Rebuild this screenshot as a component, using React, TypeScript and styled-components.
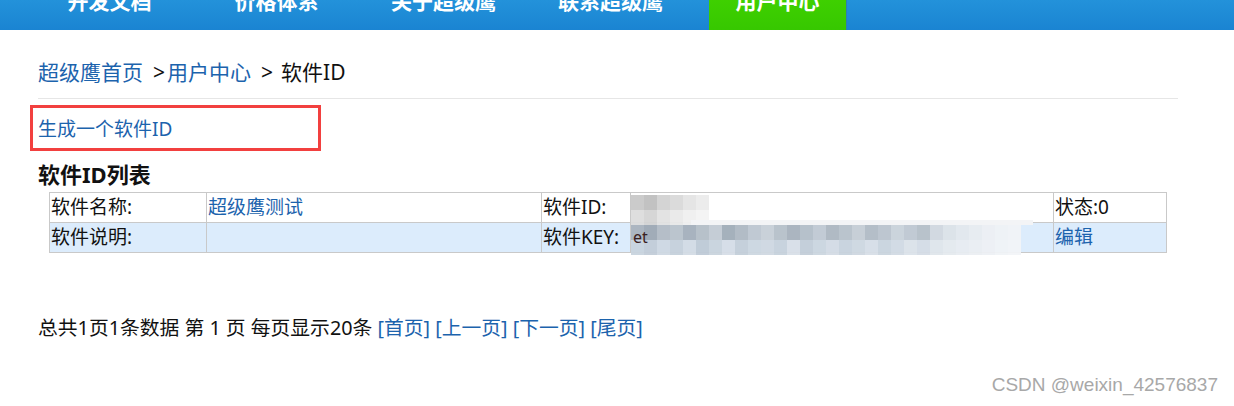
import React from "react";
import styled, {createGlobalStyle} from "styled-components";

const GlobalStyle = createGlobalStyle`
  body {
    margin: 0;
    background: #fff;
    font-family: "Noto Sans", "Noto Sans CJK SC", sans-serif;
    color: #111;
  }
`;

const navItems = ["开发文档", "价格体系", "关于超级鹰", "联系超级鹰", "用户中心"];

// grey tiles that hide the software id / key
const idTiles = [
  "#c9c9c9", "#bfbfbf", "#d2d2d2", "#dadada", "#e4e4e4", "#ececec",
  "#dddddd", "#d4d4d4", "#e2e2e2", "#e9e9e9", "#f0f0f0", "#f4f4f4",
];
const keyTop = [
  "#aab4be", "#9ea9b5", "#b3bcc6", "#bac3cc", "#a6b1bc", "#b6bfc8", "#c4ccd5",
  "#a3aeb9", "#b0bac4", "#bfc8d1", "#c8d0d8", "#b8c1ca", "#a9b3bd", "#b5bfc9",
  "#c1cad3", "#aeb8c2", "#b9c2cb", "#c6ced6", "#b2bcc6", "#bcc5ce", "#cbd3db",
  "#c0c9d2", "#b7c0c9", "#d2d9e0", "#dde3e9", "#e3e8ee", "#e8ecf1", "#edf0f4",
  "#f0f3f6", "#f2f4f7",
];
const keyBottom = [
  "#c9d4df", "#c2cdd9", "#cfd9e3", "#c6d1dc", "#d3dce5", "#bfcbd7", "#cad4de",
  "#d6dee7", "#c4cfda", "#cdd7e1", "#d0d9e2", "#c7d2dd", "#d9e0e8", "#c3ced9",
  "#ccd6e0", "#d4dce5", "#c8d3de", "#cfd8e1", "#d7dfe7", "#cbd5df", "#d2dbe4",
  "#dce3ea", "#d5dde6", "#e0e6ec", "#e5eaef", "#e8edf2", "#ebeff3", "#eef1f5",
  "#f1f4f7", "#f3f5f8",
];

export default function App() {
  return (
    <>
      <GlobalStyle />
      <Nav>
        <NavList>
          {navItems.map((item) => (
            <NavItem key={item} $active={item === "用户中心"}>
              {item}
            </NavItem>
          ))}
        </NavList>
      </Nav>
      <Main>
        <Breadcrumb>
          <Link>超级鹰首页</Link>
          <Sep $after={2}>&gt;</Sep>
          <Link>用户中心</Link>
          <Sep $after={8}>&gt;</Sep>
          <span>软件ID</span>
        </Breadcrumb>
        <RedBox>
          <Link>生成一个软件ID</Link>
        </RedBox>
        <Heading>软件ID列表</Heading>
        <Table>
          <colgroup>
            <col style={{width: 157}} />
            <col style={{width: 335}} />
            <col style={{width: 89}} />
            <col style={{width: 423}} />
            <col style={{width: 113}} />
          </colgroup>
          <tbody>
            <Row>
              <Cell>软件名称:</Cell>
              <Cell>
                <Link>超级鹰测试</Link>
              </Cell>
              <Cell>软件ID:</Cell>
              <Cell>
                <Mosaic $cols={6} $top={2}>
                  {idTiles.map((c, i) => (
                    <Tile key={i} $color={c} />
                  ))}
                </Mosaic>
                <Streak />
              </Cell>
              <Cell>状态:0</Cell>
            </Row>
            <Row $alt>
              <Cell>软件说明:</Cell>
              <Cell />
              <Cell>软件KEY:</Cell>
              <Cell>
                <KeyPeek>et</KeyPeek>
                <Mosaic $cols={30} $top={2}>
                  {keyTop.map((c, i) => (
                    <Tile key={"t" + i} $color={c} />
                  ))}
                  {keyBottom.map((c, i) => (
                    <Tile key={"b" + i} $color={c} />
                  ))}
                </Mosaic>
              </Cell>
              <Cell>
                <Link>编辑</Link>
              </Cell>
            </Row>
          </tbody>
        </Table>
        <Pager>
          总共1页1条数据 第 1 页 每页显示20条 <Link>[首页]</Link>{" "}
          <Link>[上一页]</Link> <Link>[下一页]</Link> <Link>[尾页]</Link>
        </Pager>
      </Main>
      <Watermark>CSDN @weixin_42576837</Watermark>
    </>
  );
}

const Nav = styled.div`
  height: 30px;
  overflow: hidden;
  background: linear-gradient(#2392da, #1a84d2);
`;

const NavList = styled.div`
  display: flex;
  gap: 30px;
  margin-top: -14px;
  padding-left: 41px;
`;

const NavItem = styled.div<{$active?: boolean}>`
  width: 137px;
  height: 46px;
  line-height: 30px;
  text-align: center;
  font-size: 21px;
  font-weight: 700;
  color: #fff;
  background: ${(p) => (p.$active ? "linear-gradient(#42d400, #36c700)" : "transparent")};
  border-right: ${(p) => (p.$active ? "1px solid #2f7fae" : "none")};
`;

const Main = styled.div`
  width: 1140px;
  margin-left: 38px;
`;

const Link = styled.span`
  color: #1c63ad;
`;

const Sep = styled.span<{$after: number}>`
  color: #111;
  margin: 0 ${(p) => p.$after}px 0 10px;
`;

const Breadcrumb = styled.div`
  margin-top: 27px;
  padding-bottom: 11px;
  line-height: 30px;
  font-size: 21px;
  border-bottom: 1px solid #e6e6e6;
`;

const RedBox = styled.div`
  box-sizing: border-box;
  width: 291px;
  height: 46px;
  margin: 6px 0 0 -8px;
  padding-left: 5px;
  display: flex;
  align-items: center;
  border: 3px solid #f2403f;
  font-size: 19px;
`;

const Heading = styled.h3`
  margin: 9px 0 4px;
  font-size: 22px;
  line-height: 28px;
  font-weight: 700;
`;

const Table = styled.table`
  width: 1117px;
  margin-left: 11px;
  table-layout: fixed;
  border-collapse: collapse;
  font-size: 19px;
`;

const Row = styled.tr<{$alt?: boolean}>`
  background: ${(p) => (p.$alt ? "#dcecfc" : "#fff")};
`;

const Cell = styled.td`
  position: relative;
  height: 29px;
  padding: 0 1px;
  line-height: 29px;
  border: 1px solid #c9c9c9;
  white-space: nowrap;
  overflow: visible;
`;

const Mosaic = styled.div<{$cols: number; $top: number}>`
  position: absolute;
  left: 0;
  top: ${(p) => p.$top}px;
  display: grid;
  grid-template-columns: repeat(${(p) => p.$cols}, 13px);
  grid-auto-rows: 15px;
  opacity: 0.95;
`;

const Tile = styled.div<{$color: string}>`
  background: ${(p) => p.$color};
`;

const Streak = styled.div`
  position: absolute;
  left: 60px;
  right: 20px;
  bottom: -3px;
  height: 5px;
  background: #f3f4f6;
`;

const KeyPeek = styled.span`
  position: absolute;
  left: 2px;
  top: 0;
  color: #3a2020;
  font-size: 16px;
  z-index: 1;
`;

const Pager = styled.div`
  margin-top: 60px;
  line-height: 30px;
  font-size: 19.8px;
`;

const Watermark = styled.div`
  position: absolute;
  right: 16px;
  top: 374px;
  font-family: "Liberation Sans", Arial, sans-serif;
  font-size: 19px;
  color: #a8a8a8;
`;
